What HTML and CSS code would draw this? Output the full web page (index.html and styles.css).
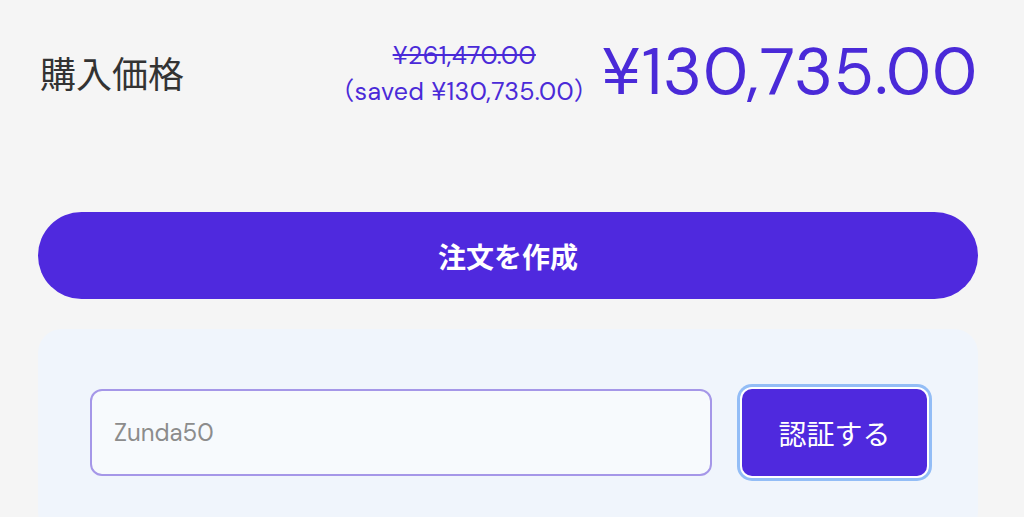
FILE: index.html
```html
<!DOCTYPE html>
<html lang="ja">
<head>
  <meta charset="UTF-8" />
  <meta name="viewport" content="width=device-width, initial-scale=1" />
  <title>購入</title>
  <link rel="stylesheet" href="styles.css">
</head>
<body>
  <div class="checkout">
    <div class="summary">
      <span class="summary-label">購入価格</span>
      <div class="price">
        <div class="price-notes">
          <span class="price-old">¥261,470.00</span>
          <span class="price-saved">（saved ¥130,735.00）</span>
        </div>
        <span class="price-now">¥130,735.00</span>
      </div>
    </div>

    <button type="button" class="order-btn">注文を作成</button>

    <div class="coupon">
      <form class="coupon-form" id="coupon-form">
        <input type="text" class="coupon-input" name="code" placeholder="Zunda50" />
        <button type="submit" class="verify-btn">認証する</button>
      </form>
    </div>
  </div>
</body>
</html>
```

FILE: styles.css
```css
body {
  margin: 0;
  background: #f5f5f5;
  font-family: "DM Sans", Roboto, "Noto Sans CJK JP", sans-serif;
  color: #333;
}
.checkout {
  width: 940px;
  margin-left: 38px;
  padding-top: 22px;
}
.summary {
  display: flex;
  align-items: center;
  justify-content: space-between;
  height: 100px;
}
.summary-label {
  font-family: "Noto Sans CJK JP", sans-serif;
  font-size: 36px;
  color: #333;
  padding-left: 2px;
}
.price {
  display: flex;
  align-items: center;
  gap: 2px;
  color: #4a2ad8;
}
.price-notes {
  display: flex;
  flex-direction: column;
  align-items: center;
  padding-top: 4px;
  font-size: 25px;
  line-height: 36px;
  letter-spacing: 0.3px;
}
.price-old {
  text-decoration: line-through;
}
.price-now {
  font-size: 66px;
  line-height: 1;
  letter-spacing: 0.8px;
}
.order-btn {
  display: block;
  width: 100%;
  height: 87px;
  margin-top: 90px;
  border: none;
  border-radius: 44px;
  background: #4f29de;
  color: white;
  font-family: "Noto Sans CJK JP", sans-serif;
  font-size: 28px;
  font-weight: bold;
  cursor: pointer;
}
.coupon {
  margin-top: 30px;
  padding: 60px 51px 60px 52px;
  background: #f0f5fc;
  border-radius: 24px;
}
.coupon-form {
  display: flex;
  align-items: center;
  gap: 30px;
}
.coupon-input {
  flex: 1;
  height: 87px;
  box-sizing: border-box;
  padding: 0 22px;
  border: 2px solid #a597e8;
  border-radius: 12px;
  background: #f7fafd;
  font-family: "DM Sans", Roboto, sans-serif;
  font-size: 24px;
  color: #333;
}
.coupon-input::placeholder {
  color: #8c8c8c;
}
.verify-btn {
  width: 185px;
  height: 87px;
  border: none;
  border-radius: 10px;
  background: #4f29de;
  color: white;
  font-family: "Noto Sans CJK JP", sans-serif;
  font-size: 28px;
  box-shadow: 0 0 0 2px #fff, 0 0 0 5px #93bdf6;
  cursor: pointer;
}
```
